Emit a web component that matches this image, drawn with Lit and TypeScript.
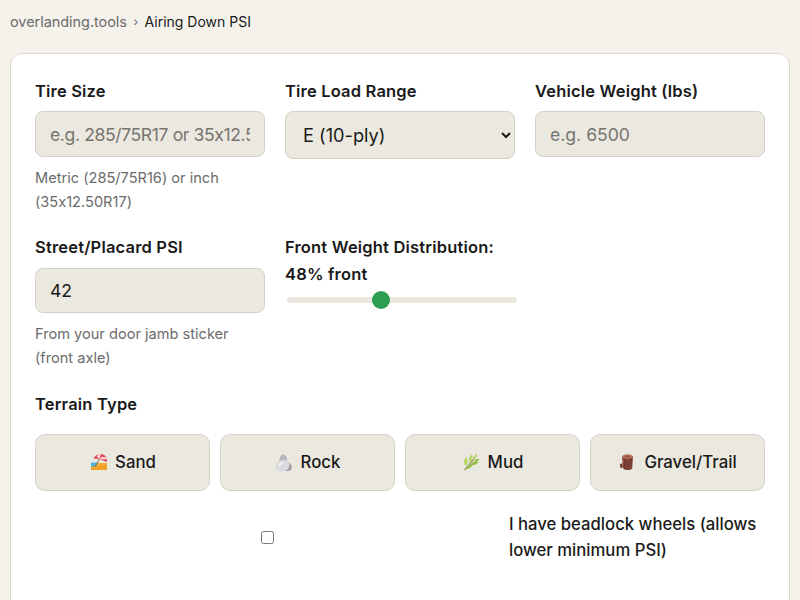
import { LitElement, html, css, svg } from "lit";
import { customElement } from "lit/decorators.js";

const icons: Record<string, unknown> = {
  sand: svg`<svg class="ico" viewBox="0 0 18 18"><rect x="2" y="10" width="16" height="7" fill="#f4b02e"/><path d="M2 9.500h7l-1.500 3.500-5.500 1z" fill="#4fb3d9"/><path d="M2 14l6-1 10-1.500V17H2z" fill="#f2a02a"/><path d="M6 14 10.500 6" stroke="#8a6a4a" stroke-width="1"/><path d="M4.500 5.500C6 1.800 10.500 .5 14.200 1.600 17 2.800 18.200 5.500 18 9L10.500 6z" fill="#e0435a"/><path d="M7.800 3.700 9.200 1.300 12 1.300 10.500 6zM13 3.800l3.900.4.900 2.300L10.500 6z" fill="#f7d9d3"/></svg>`,
  rock: svg`<svg class="ico" viewBox="0 0 18 18"><path d="M4.500 8C4 5 5.500 1.500 8 1.500c2.500 0 4.500 2.500 4 6z" fill="#b9b7be"/><path d="M.8 13.500C.8 10 4.500 7 9 7c2.500 0 4 1 5 2.500 2 1.500 3.200 4 2.700 6-.5 1.500-2 2.500-4 2.500H5c-2.500 0-4.200-2-4.200-4.500z" fill="#dcdae1"/><path d="M14 9.500c2 1.500 3.200 4 2.700 6-.5 1.500-2 2.500-4 2.500H9.500c3.500-.5 5.500-4 4.500-8.500z" fill="#a09da7"/><path d="M3.500 11.500C5 9.500 7 8.800 9 9 7 10 5.500 11.500 5 13.500c-1 .2-1.500-1-1.500-2z" fill="#f7f6f9"/></svg>`,
  mud: svg`<svg class="ico" viewBox="0 0 18 18"><path d="M2.500 17 9 9.500 14 3" stroke="#7a7a35" stroke-width="1.100" fill="none"/><path d="M3 12C1.300 9 2 5.800 4.500 4.200 6 7 6.200 10 4.800 12.500zM7.200 9C6.500 6 7.500 3 10 1.300 11 3.500 10.300 6.500 8.700 8.500zM11 6c0-2 1.500-4 4-5.300.3 2.300-1 4.300-3 5.300z" fill="#b7d663"/><path d="M4.200 16c.3-2.800 3-5 6.500-4.900-.5 2.900-3.200 4.900-6.500 4.900zM8.500 12c1.200-2.700 4.200-4.200 8-3.500C15.300 11.500 12 13 8.500 12zM12.300 7.500c1-1.200 3-1.700 5.200-1.200-1 1.700-3.200 2.200-5.200 1.200z" fill="#95bf45"/></svg>`,
  log: svg`<svg class="ico" viewBox="0 0 18 18"><path d="M4 3.500h11l-.8 12.300c-2 1.700-7 1.700-9 0z" fill="#84453a"/><path d="M7 6v9.500M10.500 7v8.500M13 5.500v7" stroke="#5f2e28" stroke-width=".9"/><path d="M4.500 10 1.800 11.500 2.500 15l2.300-.5z" fill="#6e3830"/><ellipse cx="9.500" cy="3.500" rx="5.500" ry="2.200" fill="#b8775c"/><ellipse cx="9.500" cy="3.500" rx="3" ry="1.100" fill="#96573f"/></svg>`,
};

@customElement("app-root")
export class AppRoot extends LitElement {
  static styles = css`
    :host {
      display: block;
      height: 600px;
      overflow: hidden;
      background: #f5f2ec;
      color: #1a1a1a;
      font-family: "Inter", "Liberation Sans", sans-serif;
      font-feature-settings: "calt" 0;
      box-sizing: border-box;
      padding: 0 10px;
    }
    * { box-sizing: border-box; }
    .crumbs {
      display: flex;
      align-items: center;
      height: 53px;
      padding-bottom: 11px;
      gap: 6.500px;
      font-size: 14px;
      color: #1a1a1a;
    }
    .crumbs a { color: #6b6b6b; text-decoration: none; font-size: 14.400px; }
    .crumbs .sep { color: #6b6b6b; font-size: 12px; }
    .card {
      background: #fff;
      border: 1px solid #d9d5ca;
      border-radius: 12px;
      padding: 24px;
      height: 640px;
    }
    .row {
      display: grid;
      grid-template-columns: repeat(3, 230px);
      gap: 20px;
    }
    .row + .row { margin-top: 20.400px; }
    label.lbl {
      display: block;
      font-size: 16.500px;
      letter-spacing: 0.18px;
      font-weight: 600;
      line-height: 26px;
      margin-bottom: 7.400px;
    }
    .field, select {
      display: block;
      width: 100%;
      font: inherit;
      font-size: 17.600px;
      color: #1a1a1a;
      background: #ebe8e0;
      border: 1px solid #d5d1c7;
      border-radius: 8px;
      outline: none;
    }
    .field { height: 45.600px; padding: 0 14px; }
    .tight { letter-spacing: -0.4px; }
    select { height: 48px; padding: 0 13px; font-size: 18.200px; }
    .field::placeholder { color: #77756f; opacity: 1; }
    .hint {
      font-size: 14.600px;
      line-height: 24px;
      color: #6b6b6b;
      margin-top: 9px;
    }
    input[type="range"] {
      -webkit-appearance: none;
      appearance: none;
      display: block;
      width: 230px;
      height: 18px;
      margin: 0 0 0 2px;
      background: transparent;
    }
    input[type="range"]::-webkit-slider-runnable-track {
      height: 6px;
      border-radius: 3px;
      background: #ebe8e0;
    }
    input[type="range"]::-webkit-slider-thumb {
      -webkit-appearance: none;
      width: 18px;
      height: 18px;
      margin-top: -6px;
      border-radius: 50%;
      background: #2d9d4f;
    }
    label.slabel { margin-bottom: 2.600px; line-height: 27px; }
    label.terrain-label { margin-top: 20.600px; margin-bottom: 17px; }
    .terrain {
      display: grid;
      grid-template-columns: repeat(4, 175px);
      gap: 10px;
    }
    button {
      display: flex;
      align-items: center;
      justify-content: center;
      gap: 8px;
      height: 57px;
      font: inherit;
      font-size: 16.800px;
      font-weight: 500;
      color: #1a1a1a;
      background: #ebe8e0;
      border: 1px solid #d5d1c7;
      border-radius: 10px;
      padding: 0;
    }
    .ico { width: 18px; height: 18px; display: block; }
    .check {
      display: flex;
      align-items: center;
      gap: 9px;
      margin-top: 20px;
      font-size: 16.700px;
      font-weight: 500;
      line-height: 26px;
    }
    .check input { width: 465px; height: 13px; margin: 1px 0 0; flex: none; }
    .check span { flex: 1; }
  `;

  render() {
    return html`
      <nav class="crumbs">
        <a href="#">overlanding.tools</a><span class="sep">›</span><span>Airing Down PSI</span>
      </nav>
      <main class="card">
        <div class="row">
          <div>
            <label class="lbl">Tire Size</label>
            <input class="field tight" placeholder="e.g. 285/75R17 or 35x12.50R17" />
            <div class="hint">Metric (285/75R16) or inch (35x12.50R17)</div>
          </div>
          <div>
            <label class="lbl">Tire Load Range</label>
            <select><option>E (10-ply)</option></select>
          </div>
          <div>
            <label class="lbl">Vehicle Weight (lbs)</label>
            <input class="field" placeholder="e.g. 6500" />
          </div>
        </div>
        <div class="row">
          <div>
            <label class="lbl">Street/Placard PSI</label>
            <input class="field" .value=${"42"} />
            <div class="hint">From your door jamb sticker (front axle)</div>
          </div>
          <div>
            <label class="lbl slabel">Front Weight Distribution: 48% front</label>
            <input type="range" min="40" max="60" value="48" />
          </div>
        </div>
        <label class="lbl terrain-label">Terrain Type</label>
        <div class="terrain">
          <button>${icons.sand}Sand</button>
          <button>${icons.rock}Rock</button>
          <button>${icons.mud}Mud</button>
          <button>${icons.log}Gravel/Trail</button>
        </div>
        <label class="check">
          <input type="checkbox" />
          <span>I have beadlock wheels (allows lower minimum PSI)</span>
        </label>
      </main>
    `;
  }
}
